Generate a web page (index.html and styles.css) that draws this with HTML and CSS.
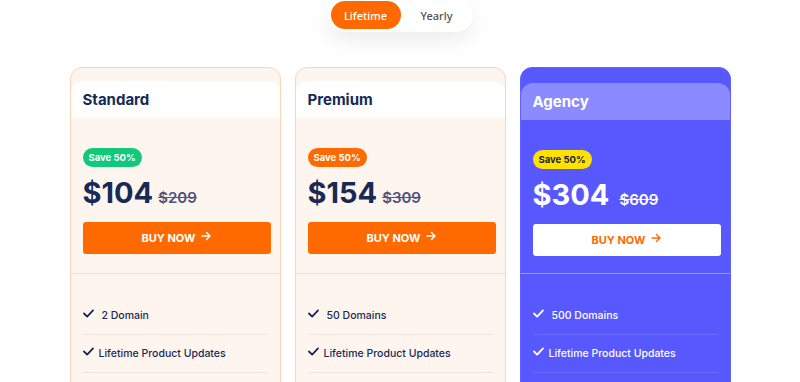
FILE: index.html
```html
<!DOCTYPE html>
<html>
  <head>
    <meta charset="UTF-8" />
    <meta name="viewport" content="width=device-width, initial-scale=1" />
    <title>Pricing</title>
    <link rel="stylesheet" href="styles.css">
  </head>
  <body>
    <main>
      <div class="toggle">
        <button class="toggle-btn active">Lifetime</button>
        <button class="toggle-btn">Yearly</button>
      </div>

      <section class="plans">
        <div class="plan">
          <div class="plan-head"><h2>Standard</h2></div>
          <div class="plan-body">
            <span class="badge badge-green">Save 50%</span>
            <div class="price">
              <span class="now">$104</span>
              <span class="was">$209</span>
            </div>
            <a class="buy" href="#">BUY NOW
              <svg viewBox="0 0 10 10" width="10" height="10"><path d="M1 5h8M5.5 1.5L9 5 5.5 8.5" fill="none" stroke="currentColor" stroke-width="1.4" stroke-linecap="round" stroke-linejoin="round"/></svg>
            </a>
          </div>
          <ul class="features">
            <li><svg viewBox="0 0 12 10" width="11" height="9"><path d="M1 5l3.5 3.5L11 1.5" fill="none" stroke="currentColor" stroke-width="2" stroke-linecap="round" stroke-linejoin="round"/></svg><span class="gap">2 Domain</span></li>
            <li><svg viewBox="0 0 12 10" width="11" height="9"><path d="M1 5l3.5 3.5L11 1.5" fill="none" stroke="currentColor" stroke-width="2" stroke-linecap="round" stroke-linejoin="round"/></svg><span>Lifetime Product Updates</span></li>
            <li></li>
          </ul>
        </div>

        <div class="plan">
          <div class="plan-head"><h2>Premium</h2></div>
          <div class="plan-body">
            <span class="badge badge-orange">Save 50%</span>
            <div class="price">
              <span class="now">$154</span>
              <span class="was">$309</span>
            </div>
            <a class="buy" href="#">BUY NOW
              <svg viewBox="0 0 10 10" width="10" height="10"><path d="M1 5h8M5.5 1.5L9 5 5.5 8.5" fill="none" stroke="currentColor" stroke-width="1.4" stroke-linecap="round" stroke-linejoin="round"/></svg>
            </a>
          </div>
          <ul class="features">
            <li><svg viewBox="0 0 12 10" width="11" height="9"><path d="M1 5l3.5 3.5L11 1.5" fill="none" stroke="currentColor" stroke-width="2" stroke-linecap="round" stroke-linejoin="round"/></svg><span class="gap">50 Domains</span></li>
            <li><svg viewBox="0 0 12 10" width="11" height="9"><path d="M1 5l3.5 3.5L11 1.5" fill="none" stroke="currentColor" stroke-width="2" stroke-linecap="round" stroke-linejoin="round"/></svg><span>Lifetime Product Updates</span></li>
            <li></li>
          </ul>
        </div>

        <div class="plan plan-featured">
          <div class="plan-head"><h2>Agency</h2></div>
          <div class="plan-body">
            <span class="badge badge-yellow">Save 50%</span>
            <div class="price">
              <span class="now">$304</span>
              <span class="was">$609</span>
            </div>
            <a class="buy" href="#">BUY NOW
              <svg viewBox="0 0 10 10" width="10" height="10"><path d="M1 5h8M5.5 1.5L9 5 5.5 8.5" fill="none" stroke="currentColor" stroke-width="1.4" stroke-linecap="round" stroke-linejoin="round"/></svg>
            </a>
          </div>
          <ul class="features">
            <li><svg viewBox="0 0 12 10" width="11" height="9"><path d="M1 5l3.5 3.5L11 1.5" fill="none" stroke="currentColor" stroke-width="2" stroke-linecap="round" stroke-linejoin="round"/></svg><span class="gap">500 Domains</span></li>
            <li><svg viewBox="0 0 12 10" width="11" height="9"><path d="M1 5l3.5 3.5L11 1.5" fill="none" stroke="currentColor" stroke-width="2" stroke-linecap="round" stroke-linejoin="round"/></svg><span>Lifetime Product Updates</span></li>
            <li></li>
          </ul>
        </div>
      </section>
    </main>
  </body>
</html>
```

FILE: styles.css
```css
body {
  font-family: Inter, "Noto Sans", sans-serif;
  background-color: #fff;
  color: #162a55;
  margin: 0;
  height: 382px;
  overflow: hidden;
}

main {
  display: flex;
  flex-direction: column;
  align-items: center;
}

/* Lifetime / Yearly switch */
.toggle {
  display: flex;
  gap: 3px;
  padding: 3px;
  margin-top: -2px;
  background-color: #fff;
  border-radius: 18px;
  box-shadow: 0 8px 22px rgba(0, 0, 0, 0.08);
}

.toggle-btn {
  font-family: "Noto Sans", sans-serif;
  font-size: 11px;
  font-weight: 500;
  border: none;
  background: none;
  color: #55504f;
  height: 28px;
  width: 66px;
  border-radius: 14px;
  padding: 0;
}

.toggle-btn.active {
  width: 70px;
  background-color: #ff6a00;
  color: #fff;
}

.plans {
  display: grid;
  grid-template-columns: repeat(3, 211px);
  gap: 14px;
  margin-top: 35px;
}

.plan {
  background-color: #fff5ef;
  border: 1px solid #fcd5b9;
  border-radius: 12px;
  padding-top: 13px;
  height: 360px;
}

.plan-head {
  background-color: #fff;
  border-radius: 12px 12px 0 0;
  height: 37px;
  display: flex;
  align-items: center;
  padding-left: 12px;
}

.plan-head h2 {
  margin: 0;
  font-size: 15px;
  font-weight: 700;
  color: #162a55;
}

.plan-body {
  display: flex;
  flex-direction: column;
  align-items: flex-start;
  padding: 30px 9px 19px 12px;
  border-bottom: 1px solid #f5ddd0;
}

.badge {
  font-size: 9.5px;
  font-weight: 700;
  line-height: 19px;
  padding: 0 6px;
  border-radius: 10px;
  color: #fff;
}

.badge-green {
  background-color: #10c97a;
}

.badge-orange {
  background-color: #ff6a00;
}

.badge-yellow {
  background-color: #ffe200;
  color: #1d1d3a;
}

.price {
  display: flex;
  align-items: baseline;
  gap: 5px;
  margin-top: 8px;
  height: 40px;
}

.now {
  font-size: 29px;
  font-weight: 700;
  color: #162a55;
}

.was {
  font-size: 15px;
  font-weight: 600;
  color: #4d5382;
  text-decoration: line-through;
}

.buy {
  align-self: stretch;
  display: flex;
  justify-content: center;
  align-items: center;
  gap: 6px;
  height: 32px;
  margin-top: 7px;
  background-color: #ff6a00;
  color: #fff;
  border-radius: 3px;
  font-size: 11px;
  font-weight: 700;
  text-decoration: none;
}

.buy svg {
  margin-top: -4px;
}

.features {
  list-style: none;
  margin: 0;
  padding: 23px 12px 0 12px;
}

.features li {
  display: flex;
  align-items: center;
  gap: 5px;
  height: 37px;
  border-bottom: 1px solid #f3e3da;
  font-size: 10.5px;
  font-weight: 500;
  color: #162a55;
}

.features li svg {
  margin-top: -5px;
}

.features .gap {
  margin-left: 3px;
}

/* highlighted plan */
.plan-featured {
  background-color: #5858ff;
  border-color: #6161ff;
  padding-top: 15px;
}

.plan-featured .plan-head {
  background-color: #8b8bff;
}

.plan-featured .plan-head h2,
.plan-featured .now,
.plan-featured .was,
.plan-featured .features li {
  color: #fff;
}

.plan-featured .plan-body {
  padding-bottom: 17px;
  border-bottom-color: #9a9aff;
}

.plan-featured .price {
  gap: 10px;
}

.plan-featured .buy {
  background-color: #fff;
  color: #ff6a00;
}

.plan-featured .features li {
  border-bottom-color: #6c6cff;
}
```
